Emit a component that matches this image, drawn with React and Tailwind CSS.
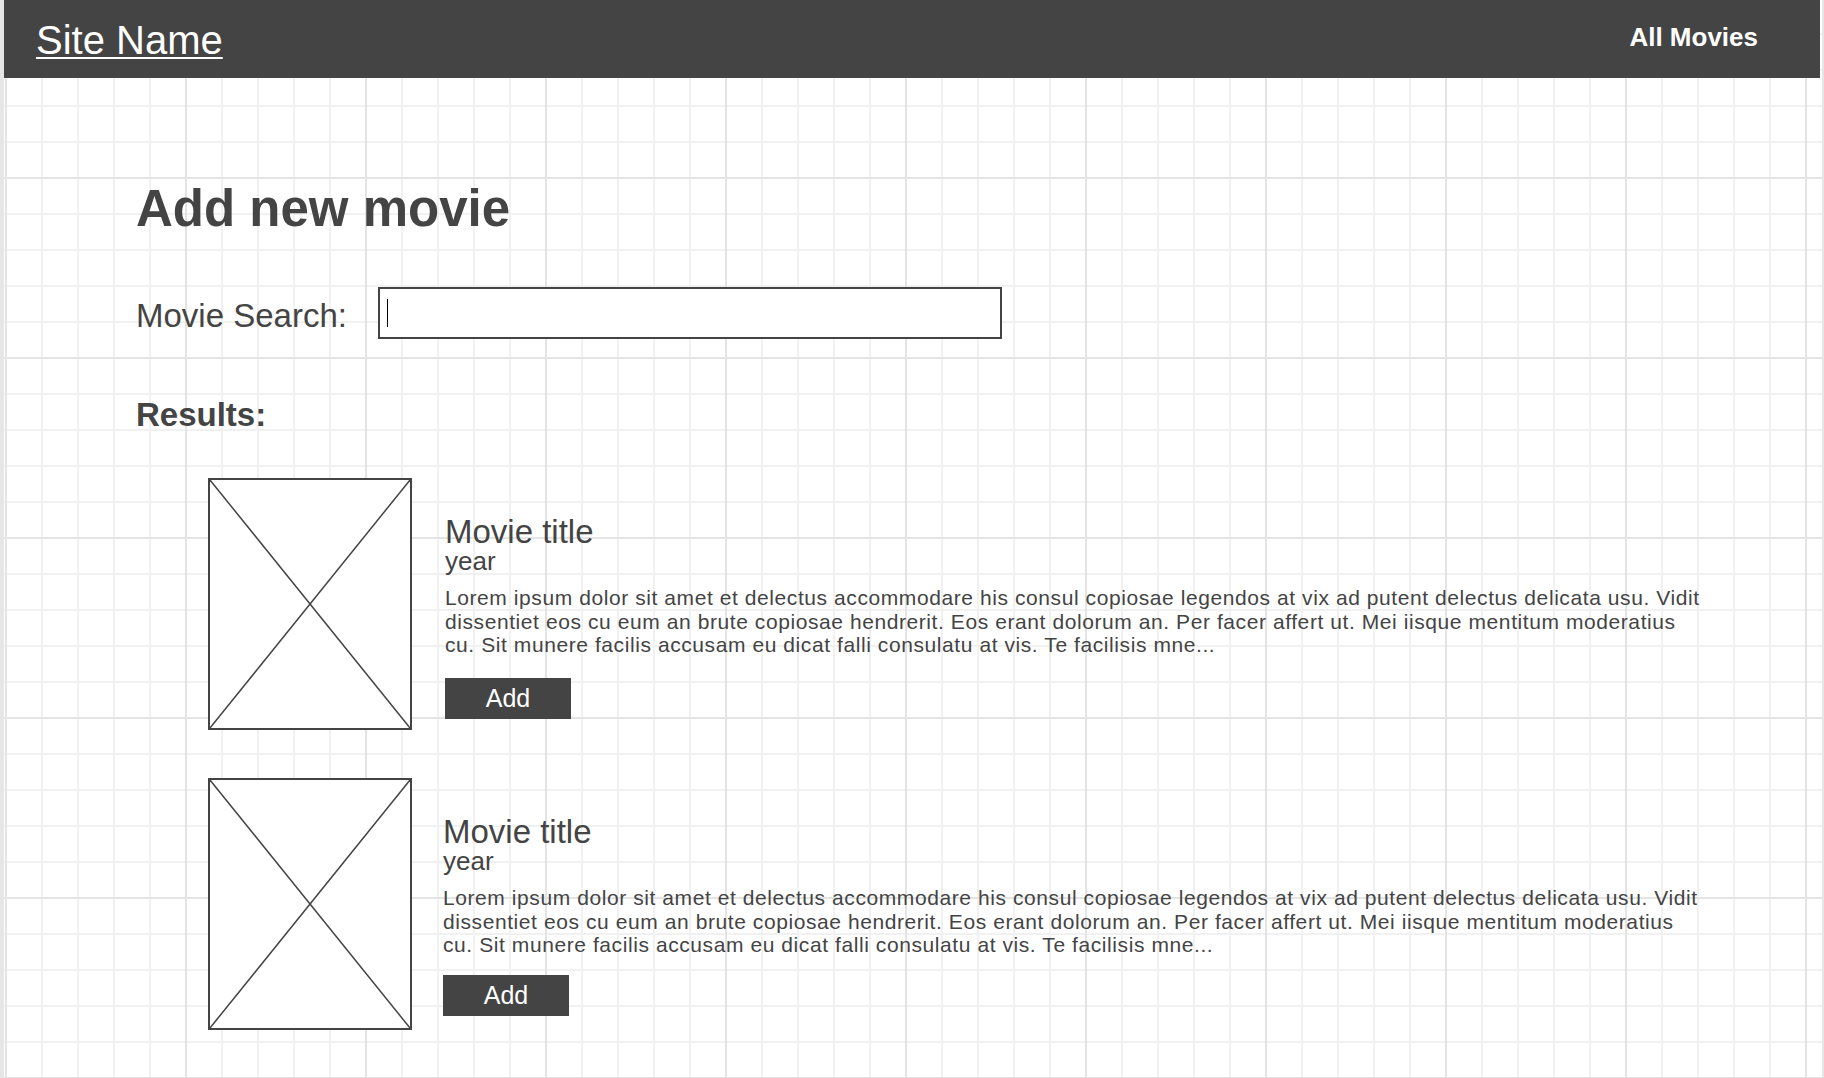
import React from "react";

const LINES = [
  "Lorem ipsum dolor sit amet et delectus accommodare his consul copiosae legendos at vix ad putent delectus delicata usu. Vidit",
  "dissentiet eos cu eum an brute copiosae hendrerit. Eos erant dolorum an. Per facer affert ut. Mei iisque mentitum moderatius",
  "cu. Sit munere facilis accusam eu dicat falli consulatu at vis. Te facilisis mne...",
];

function Placeholder() {
  return (
    <div className="w-[204px] h-[252px] shrink-0 border-2 border-[#444] bg-white">
      <svg className="block w-full h-full" viewBox="0 0 200 248" preserveAspectRatio="none">
        <line x1="0" y1="0" x2="200" y2="248" stroke="#444" strokeWidth="1.5" vectorEffect="non-scaling-stroke" />
        <line x1="200" y1="0" x2="0" y2="248" stroke="#444" strokeWidth="1.5" vectorEffect="non-scaling-stroke" />
      </svg>
    </div>
  );
}

function Result({ shift }) {
  return (
    <div className="flex">
      <Placeholder />
      <div className={`${shift ? "ml-[31px]" : "ml-[33px]"} pt-[37px] flex flex-col items-start`}>
        <div className="text-[33px] leading-none">Movie title</div>
        <div className="text-[26px] leading-none">year</div>
        <p className="mt-[12px] text-[21px] leading-[23.5px] tracking-[0.58px] whitespace-nowrap">
          {LINES.map((l, i) => (
            <span key={i} className="block">{l}</span>
          ))}
        </p>
        <button className={`${shift ? "mt-[18px]" : "mt-[21px]"} w-[126px] h-[41px] bg-[#444] text-white text-[25px] leading-none flex items-center justify-center`}>
          Add
        </button>
      </div>
    </div>
  );
}

export default function App() {
  return (
    <div className="min-h-screen h-[1078px] w-full overflow-hidden border-l-4 border-r-2 border-[#e6e6e6] bg-white [background-image:linear-gradient(to_right,#e4e4e4_2px,transparent_2px),linear-gradient(to_bottom,#e4e4e4_2px,transparent_2px),linear-gradient(to_right,#f1f1f1_2px,transparent_2px),linear-gradient(to_bottom,#f1f1f1_2px,transparent_2px)] [background-size:180px_180px,180px_180px,36px_36px,36px_36px] [background-position:1px_-3px,1px_-3px,1px_-3px,1px_-3px] font-['Liberation_Sans',Arial,sans-serif] text-[#444]">
      <header className="h-[78px] mr-[2px] bg-[#444] flex items-center justify-between pl-[32px] pr-[62px]">
        <a href="#" className="mt-[2px] text-[40px] leading-none text-white underline decoration-2 underline-offset-[3px]">
          Site Name
        </a>
        <a href="#" className="text-[26px] font-bold leading-none text-white -mt-[4px]">
          All Movies
        </a>
      </header>
      <main className="pl-[132px] pt-[105px]">
        <h1 className="text-[51px] font-bold leading-none">Add new movie</h1>
        <div className="mt-[53px] flex items-center">
          <label className="mt-[4px] w-[242px] text-[33px] leading-none">Movie Search:</label>
          <div className="w-[624px] h-[52px] border-2 border-[#444] bg-white flex items-center pl-[7px]">
            <span className="block w-px h-[28px] bg-black" />
          </div>
        </div>
        <h2 className="mt-[59px] text-[33px] font-bold leading-none">Results:</h2>
        <div className="mt-[47px] ml-[72px] flex flex-col gap-[48px]">
          <Result />
          <Result shift />
        </div>
      </main>
    </div>
  );
}
